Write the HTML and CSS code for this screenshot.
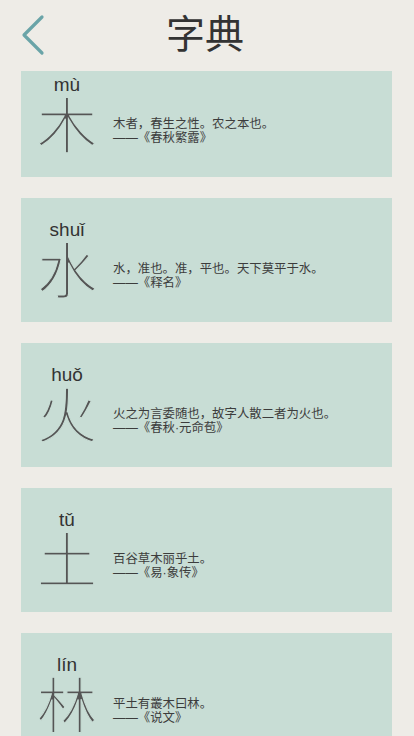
FILE: index.html
```html
<!DOCTYPE html>
<html lang="zh-CN">

<head>
    <meta charset="UTF-8">
    <meta name="viewport" content="width=device-width, initial-scale=1.0">
    <title>字典</title>
    <link rel="stylesheet" href="styles.css">
</head>

<body>
    <div class="header">
        <a class="back" href="#">
            <svg width="30" height="44" viewBox="0 0 30 44">
                <polyline points="21,3 3,21 21,39" fill="none" stroke="#6aa4a8" stroke-width="3.2" stroke-linecap="round" stroke-linejoin="round" />
            </svg>
        </a>
        <h1 class="title">字典</h1>
    </div>
    <div class="list">
        <div class="card">
            <div class="zi">
                <div class="py">mù</div>
                <div class="char">木</div>
            </div>
            <div class="text">
                <p>木者，春生之性。农之本也。</p>
                <p>——《春秋繁露》</p>
            </div>
        </div>
        <div class="card">
            <div class="zi">
                <div class="py">shuǐ</div>
                <div class="char">水</div>
            </div>
            <div class="text">
                <p>水，准也。准，平也。天下莫平于水。</p>
                <p>——《释名》</p>
            </div>
        </div>
        <div class="card">
            <div class="zi">
                <div class="py">huǒ</div>
                <div class="char">火</div>
            </div>
            <div class="text">
                <p>火之为言委随也，故字人散二者为火也。</p>
                <p>——《春秋·元命苞》</p>
            </div>
        </div>
        <div class="card">
            <div class="zi">
                <div class="py">tǔ</div>
                <div class="char">土</div>
            </div>
            <div class="text">
                <p>百谷草木丽乎土。</p>
                <p>——《易·象传》</p>
            </div>
        </div>
        <div class="card">
            <div class="zi">
                <div class="py">lín</div>
                <div class="char">林</div>
            </div>
            <div class="text">
                <p>平土有叢木曰林。</p>
                <p>——《说文》</p>
            </div>
        </div>
    </div>
    <script>
        // 列表已滚动了一点
        document.querySelector('.list').scrollTop = 18
    </script>
</body>

</html>
```

FILE: styles.css
```css
* {
    margin: 0;
    box-sizing: border-box;
    padding: 0;
}

body {
    background: #eeece7;
    font-family: "Noto Sans CJK SC", sans-serif;
    color: #3a3a3a;
}

.header {
    position: relative;
    height: 71px;
    display: flex;
    justify-content: center;
}

.back {
    position: absolute;
    left: 21px;
    top: 14px;
}

.back svg {
    display: block;
}

.title {
    font-size: 39px;
    font-weight: 400;
    line-height: 71px;
    color: #333;
    margin-top: -4px;
    margin-left: -4px;
}

.list {
    height: 665px;
    overflow-y: auto;
    scrollbar-width: none;
    padding: 0 22px 20px 21px;
}

.card {
    display: flex;
    align-items: flex-start;
    height: 124px;
    margin-bottom: 21px;
    background: #c8ddd5;
}

.zi {
    width: 92px;
    padding-top: 22px;
    text-align: center;
}

.py {
    font-family: "Liberation Sans", Arial, sans-serif;
    font-size: 19px;
    line-height: 19px;
    color: #333;
}

.char {
    font-size: 60px;
    font-weight: 200;
    line-height: 56px;
    color: #555;
    -webkit-text-stroke: 1.1px #c8ddd5;
}

.text {
    padding-top: 64px;
    font-family: "Liberation Sans", "Noto Sans CJK TC", sans-serif;
    font-size: 12.4px;
    line-height: 14px;
    color: #3c3c3c;
}
```
